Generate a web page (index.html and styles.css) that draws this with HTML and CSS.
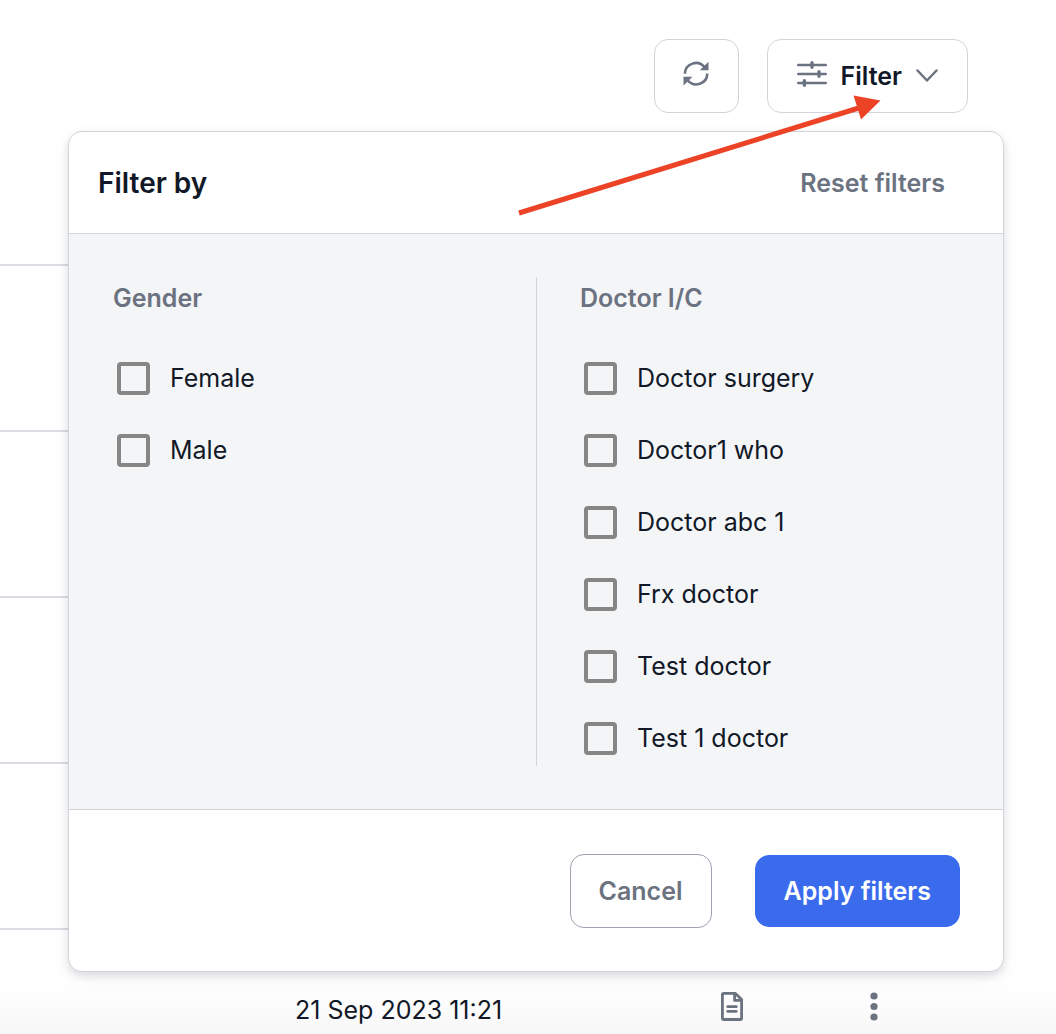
FILE: index.html
```html
<!DOCTYPE html>
<html lang="en">
<head>
<meta charset="utf-8">
<meta name="viewport" content="width=device-width, initial-scale=1">
<title>Filter by</title>
<link rel="stylesheet" href="styles.css">
</head>
<body>
<main class="page">
  <div class="toolbar">
    <button class="btn btn-icon" type="button" aria-label="Refresh">
      <svg class="raised" width="27" height="26" viewBox="0 0 27 26" fill="none" stroke="currentColor" stroke-width="2.6">
        <path d="M1.900 12.800A11 11 0 0 1 21.500 6.200M24.300 12.600A11 11 0 0 1 4.700 19.200"/>
        <path d="M25.500 .8V9.200h-8.700zM.5 24.600V15.800h9z" fill="currentColor" stroke="none"/>
      </svg>
    </button>
    <button class="btn btn-filter" type="button" aria-expanded="true">
      <svg class="raised" width="30" height="28" viewBox="0 0 30 28" fill="none" stroke="currentColor" stroke-linecap="round">
        <path d="M1.300 5h27.400M1.300 14h27.400M1.300 23h27.400" stroke-width="2.600"/>
        <path d="M15 2.700v4.600M22 11.700v4.600M7.400 20.700v4.600" stroke-width="3.400"/>
      </svg>
      <span class="btn-filter-text">Filter</span>
      <svg width="22" height="14" viewBox="0 0 22 14" fill="none" stroke="currentColor" stroke-width="2.500" stroke-linecap="round" stroke-linejoin="round"><path d="M1.500 1.500L11 11.500l9.500-10"/></svg>
    </button>
  </div>

  <table class="records">
    <colgroup><col class="col-lead"><col class="col-date"><col class="col-action"><col class="col-action"><col></colgroup>
    <thead><tr><th></th><th></th><th></th><th></th><th></th></tr></thead>
    <tbody>
      <tr><td></td><td></td><td></td><td></td><td></td></tr>
      <tr><td></td><td></td><td></td><td></td><td></td></tr>
      <tr><td></td><td></td><td></td><td></td><td></td></tr>
      <tr><td></td><td></td><td></td><td></td><td></td></tr>
      <tr class="current">
        <td></td>
        <td>21 Sep 2023 11:21</td>
        <td><button class="row-btn" type="button" aria-label="View document">
          <svg width="22" height="29" viewBox="0 0 22 29" fill="none" stroke="currentColor" stroke-width="2.800" stroke-linejoin="round"><path d="M2.600 1.400h11.800l6.200 6.200v18.700a1.200 1.200 0 0 1-1.200 1.200H2.600a1.200 1.200 0 0 1-1.200-1.200V2.600a1.200 1.200 0 0 1 1.200-1.200zM13.600 1.400v7h7"/><path d="M6.700 14.700h8.600M6.700 19.300h8.600" stroke-linecap="round"/></svg>
        </button></td>
        <td><button class="row-btn" type="button" aria-label="More actions">
          <svg width="8" height="29" viewBox="0 0 8 29" fill="currentColor"><circle cx="4" cy="4" r="3.600"/><circle cx="4" cy="14.500" r="3.600"/><circle cx="4" cy="25" r="3.600"/></svg>
        </button></td>
        <td></td>
      </tr>
    </tbody>
  </table>

  <form class="panel">
    <header class="panel-head">
      <h2 class="panel-title">Filter by</h2>
      <button class="reset" type="reset">Reset filters</button>
    </header>
    <div class="panel-body">
      <div class="column">
        <fieldset class="group">
          <legend class="group-title">Gender</legend>
          <label class="option"><input class="box" type="checkbox">Female</label>
          <label class="option"><input class="box" type="checkbox">Male</label>
        </fieldset>
      </div>
      <div class="column">
        <fieldset class="group">
          <legend class="group-title">Doctor I/C</legend>
          <label class="option"><input class="box" type="checkbox">Doctor surgery</label>
          <label class="option"><input class="box" type="checkbox">Doctor1 who</label>
          <label class="option"><input class="box" type="checkbox">Doctor abc 1</label>
          <label class="option"><input class="box" type="checkbox">Frx doctor</label>
          <label class="option"><input class="box" type="checkbox">Test doctor</label>
          <label class="option"><input class="box" type="checkbox">Test 1 doctor</label>
        </fieldset>
      </div>
    </div>
    <footer class="panel-foot">
      <button class="btn btn-cancel" type="button">Cancel</button>
      <button class="btn btn-apply" type="submit">Apply filters</button>
    </footer>
  </form>

  <svg class="pointer" width="364" height="122" viewBox="0 0 364 122" aria-hidden="true">
    <path d="M1 119L344 13" stroke="#ec4326" stroke-width="5"/>
    <path d="M335.500 1.500L362.500 6.500L343 25.500z" fill="#ec4326"/>
  </svg>
</main>
</body>
</html>
```
FILE: styles.css
```css
* { box-sizing: border-box; }

body {
  margin: 0;
  background: #fff;
  color: #111827;
  font-family: Inter, "Liberation Sans", sans-serif;
  font-size: 25px;
}

button {
  font: inherit;
  font-weight: 600;
  cursor: pointer;
}

svg { display: block; flex: none; }

.page {
  position: relative;
  height: 100vh;
  overflow: hidden;
  background: linear-gradient(#fff, #f7f7f7) bottom / 100% 50px no-repeat;
}

/* Toolbar */
.toolbar {
  display: flex;
  justify-content: flex-end;
  gap: 28px;
  padding: 39px 88px 0 0;
}

.btn {
  display: flex;
  align-items: center;
  justify-content: center;
  height: 74px;
  padding: 0 28px;
  border: 1px solid #d1d5db;
  border-radius: 14px;
  background: #fff;
  color: #6b7280;
}

.btn-filter {
  gap: 14px;
  padding: 0 29px;
}

.btn-filter-text { color: #111827; }
.raised { margin-bottom: 4px; }

/* Records table */
.records {
  width: calc(100% - 88px);
  table-layout: fixed;
  border-collapse: separate;
  border-spacing: 0;
}

.col-lead { width: 295px; }
.col-date { width: 366px; }
.col-action { width: 142px; }

.records th,
.records td {
  height: 166px;
  padding: 0;
  border-bottom: 2px solid #d9dce0;
  line-height: 40px;
  vertical-align: top;
}

.records th { height: 153px; }

.records .current td { padding-top: 60px; }

.row-btn {
  display: block;
  margin: 2px auto 0;
  padding: 0;
  border: 0;
  background: none;
  color: #6b7280;
}

/* Filter menu */
.panel {
  position: absolute;
  top: 131px;
  right: 52px;
  left: 68px;
  overflow: hidden;
  border: 1px solid #d1d5db;
  border-radius: 14px;
  background: #fff;
  box-shadow: 0 4px 8px rgba(17, 24, 39, .12), 0 8px 24px rgba(17, 24, 39, .04);
}

.panel-head {
  display: flex;
  align-items: center;
  justify-content: space-between;
  height: 101px;
  padding: 0 58px 0 29px;
}

.panel-title {
  margin: 0;
  font-size: 28px;
  font-weight: 600;
}

.reset {
  padding: 0;
  border: 0;
  background: none;
  color: #6b7280;
}

.panel-body {
  display: grid;
  grid-template-columns: 1fr 1fr;
  padding: 43px 0;
  border-top: 1px solid #d1d5db;
  border-bottom: 1px solid #d1d5db;
  background: #f4f5f7;
}

.column { padding: 0 44px; }

.column + .column {
  padding-left: 43px;
  border-left: 1px solid #d1d5db;
}

.group {
  display: flex;
  flex-direction: column;
  gap: 16px;
  min-width: 0;
  margin: 0;
  padding: 0;
  border: 0;
}

.group-title {
  margin-bottom: 31px;
  padding: 0;
  color: #6b7280;
  font-weight: 600;
  line-height: 42px;
}

.option {
  display: flex;
  align-items: center;
  gap: 20px;
  height: 56px;
  padding-left: 4px;
}

.box {
  appearance: none;
  width: 33px;
  height: 33px;
  margin: 0;
  border: 4px solid #868686;
  border-radius: 4px;
}

.box:checked { background: #3a6bed; }

.panel-foot {
  display: flex;
  align-items: center;
  justify-content: flex-end;
  gap: 43px;
  padding: 44px 43px 43px;
}

.btn-cancel { border-color: #9ca3af; }

.btn-apply {
  height: 72px;
  border-color: #3a6bed;
  background: #3a6bed;
  color: #fff;
}

/* Callout arrow over the Filter button */
.pointer {
  position: absolute;
  top: 94px;
  right: 174px;
  pointer-events: none;
}
```
